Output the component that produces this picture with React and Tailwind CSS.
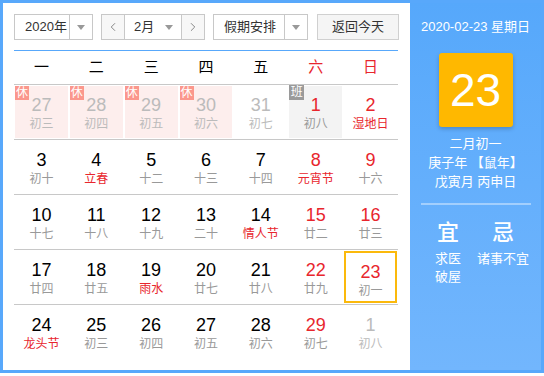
import { ChevronLeft, ChevronRight } from 'lucide-react'

const FONT = { fontFamily: '"Liberation Sans", "Noto Sans CJK SC", sans-serif' }

const WEEK = ['一', '二', '三', '四', '五', '六', '日']

// n: day, l: lunar text, other: outside month, red: red number, lr: red lunar
const ROWS = [
  [
    { n: 27, l: '初三', other: true, rest: true },
    { n: 28, l: '初四', other: true, rest: true },
    { n: 29, l: '初五', other: true, rest: true },
    { n: 30, l: '初六', other: true, rest: true },
    { n: 31, l: '初七', other: true },
    { n: 1, l: '初八', red: true, work: true },
    { n: 2, l: '湿地日', red: true, lr: true },
  ],
  [
    { n: 3, l: '初十' },
    { n: 4, l: '立春', lr: true },
    { n: 5, l: '十二' },
    { n: 6, l: '十三' },
    { n: 7, l: '十四' },
    { n: 8, l: '元宵节', red: true, lr: true },
    { n: 9, l: '十六', red: true },
  ],
  [
    { n: 10, l: '十七' },
    { n: 11, l: '十八' },
    { n: 12, l: '十九' },
    { n: 13, l: '二十' },
    { n: 14, l: '情人节', lr: true },
    { n: 15, l: '廿二', red: true },
    { n: 16, l: '廿三', red: true },
  ],
  [
    { n: 17, l: '廿四' },
    { n: 18, l: '廿五' },
    { n: 19, l: '雨水', lr: true },
    { n: 20, l: '廿七' },
    { n: 21, l: '廿八' },
    { n: 22, l: '廿九', red: true },
    { n: 23, l: '初一', red: true, sel: true },
  ],
  [
    { n: 24, l: '龙头节', lr: true },
    { n: 25, l: '初三' },
    { n: 26, l: '初四' },
    { n: 27, l: '初五' },
    { n: 28, l: '初六' },
    { n: 29, l: '初七', red: true },
    { n: 1, l: '初八', other: true },
  ],
]

function Caret() {
  return <span className="block w-0 h-0 border-x-[4px] border-x-transparent border-t-[5px] border-t-[#999]" />
}

function Cell({ d }) {
  let bg = ''
  if (d.rest) bg = 'bg-[#fdeeed]'
  if (d.work) bg = 'bg-[#f3f3f3]'
  const numColor = d.other ? 'text-[#bbb]' : d.red ? 'text-[#e8262d]' : 'text-black'
  const lunarColor = d.other ? 'text-[#bbb]' : d.lr ? 'text-[#e8262d]' : 'text-[#999]'
  return (
    <div className="p-px h-[54px]">
      <div className={`relative h-full flex flex-col items-center pt-[8px] ${bg} ${d.sel ? 'border-2 border-[#fbb90c] pt-[6px]' : ''}`}>
        {d.rest && (
          <span className="absolute left-0 top-0 w-[14px] h-[14px] bg-[#fb978c] text-white text-[12px] leading-[14px] text-center">休</span>
        )}
        {d.work && (
          <span className="absolute left-0 -top-px w-[15px] h-[15px] bg-[#9a9a9a] text-white text-[12px] leading-[15px] text-center">班</span>
        )}
        <span className={`text-[18px] leading-[22px] ${numColor}`}>{d.n}</span>
        <span className={`text-[12px] leading-[16px] ${lunarColor}`}>{d.l}</span>
      </div>
    </div>
  )
}

export default function App() {
  return (
    <div style={FONT} className="w-[544px] h-[373px] border-[3px] border-[#58a8fb] flex">
      {/* calendar */}
      <div className="w-[407px] bg-white px-[11px] pt-[11px]">
        <div className="flex items-center h-[26px] text-[13px] text-[#333]">
          <div className="w-[79px] h-full border border-[#c8c8c8] flex">
            <span className="flex-1 flex items-center pl-[10px]">2020年</span>
            <span className="w-[23px] border-l border-[#c8c8c8] flex items-center justify-center"><Caret /></span>
          </div>
          <div className="ml-[8px] w-[104px] h-full border border-[#c8c8c8] flex">
            <span className="w-[22px] bg-[#f7f7f7] flex items-center justify-center text-[#777]"><ChevronLeft size={14} strokeWidth={1.5} /></span>
            <span className="flex-1 border-x border-[#c8c8c8] flex items-center justify-between pl-[9px] pr-[8px]">2月<Caret /></span>
            <span className="w-[22px] bg-[#f7f7f7] flex items-center justify-center text-[#777]"><ChevronRight size={14} strokeWidth={1.5} /></span>
          </div>
          <div className="ml-[8px] w-[95px] h-full border border-[#c8c8c8] flex">
            <span className="flex-1 flex items-center pl-[10px]">假期安排</span>
            <span className="w-[23px] border-l border-[#c8c8c8] flex items-center justify-center"><Caret /></span>
          </div>
          <div className="ml-[9px] w-[82px] h-full border border-[#d0d0d0] bg-[#f5f5f5] flex items-center justify-center">返回今天</div>
        </div>

        <div className="mt-[10px] w-[384px] border-t-[1.5px] border-[#58a8fb]">
          <div className="grid grid-cols-7 h-[34px] border-b border-[#c8c8c8] text-[15px] items-center text-center">
            {WEEK.map((w, i) => (
              <span key={w} className={i >= 5 ? 'text-[#e8262d]' : 'text-black'}>{w}</span>
            ))}
          </div>
          {ROWS.map((row, ri) => (
            <div key={ri} className={`grid grid-cols-7 ${ri < 4 ? 'border-b border-[#c8c8c8]' : ''}`}>
              {row.map((d, i) => <Cell key={i} d={d} />)}
            </div>
          ))}
        </div>
      </div>

      {/* side panel */}
      <div className="flex-1 bg-gradient-to-b from-[#56a8fb] to-[#72b6fd] text-white flex flex-col items-center">
        <div className="mt-[15px] text-[13px] leading-[18px]">2020-02-23 星期日</div>
        <div className="mt-[17px] w-[74px] h-[74px] rounded-[3px] bg-[#ffb800] shadow-[0_2px_4px_rgba(0,0,0,0.2)] flex items-center justify-center text-[46px] leading-none">23</div>
        <div className="mt-[7px] text-[13px] leading-[19px] text-center">
          <div>二月初一</div>
          <div>庚子年 【鼠年】</div>
          <div>戊寅月 丙申日</div>
        </div>
        <div className="mt-[12px] w-[110px] h-[2px] bg-white/40" />
        <div className="mt-[14px] w-[110px] grid grid-cols-2 text-center">
          <div>
            <div className="text-[22px] leading-[28px] font-medium">宜</div>
            <div className="mt-[3px] text-[13px] leading-[18px]">求医<br />破屋</div>
          </div>
          <div>
            <div className="text-[22px] leading-[28px] font-medium">忌</div>
            <div className="mt-[3px] text-[13px] leading-[18px]">诸事不宜</div>
          </div>
        </div>
      </div>
    </div>
  )
}
